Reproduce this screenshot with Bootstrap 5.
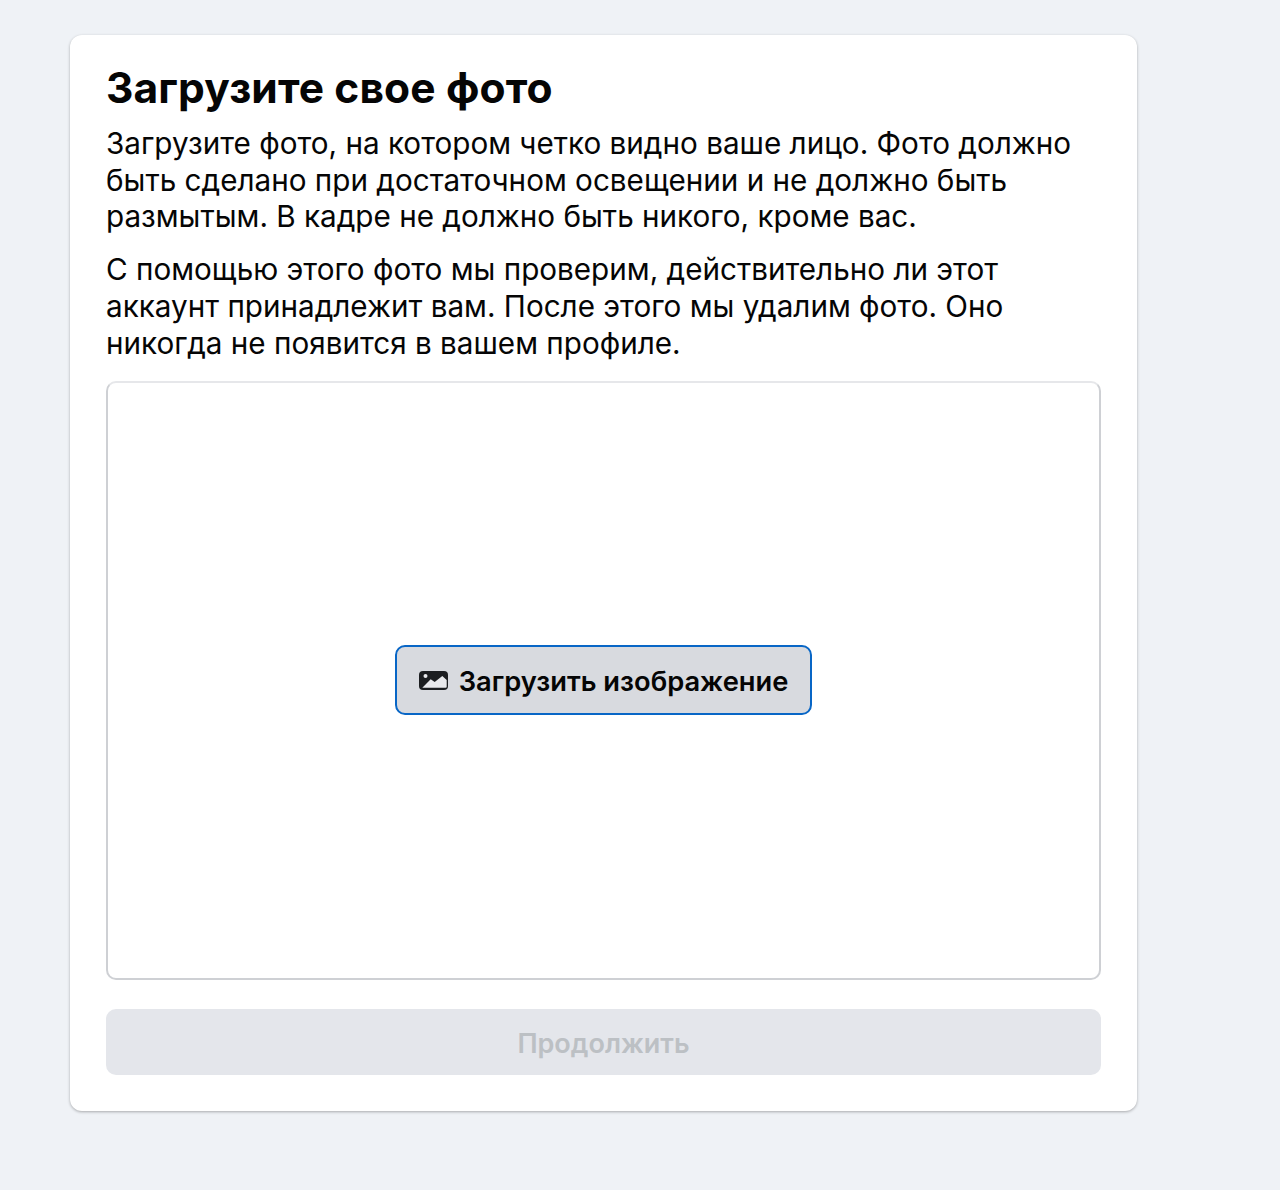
<!DOCTYPE html>
<html lang="ru"><head><meta charset="utf-8">
<link rel="stylesheet" href="https://cdn.jsdelivr.net/npm/bootstrap@5.3.0/dist/css/bootstrap.min.css">
<style>
html,body{height:1190px;overflow:hidden}
body{background:#eff2f6;font-family:Inter,"Liberation Sans",sans-serif;color:#050505;padding:35px 0 0 70px}
.sheet{width:1067px;height:1076px;background:#fff;border-radius:12px;box-shadow:0 1px 3px rgba(0,0,0,.3);padding:29px 36px 36px 36px}
.ttl{font-size:42.5px;font-weight:700;line-height:47px;margin:0 0 14px;letter-spacing:.13px}
.para{font-size:29.67px;line-height:36.7px;margin:0 0 16px}
.drop{height:599px;border:2px solid #ced0d4;border-top-color:#e6e7ea;border-radius:10px;margin-top:20px}
.upl{width:417px;height:70px;margin-bottom:2px;background:#d8dadf;border:2.5px solid #0866c6;border-radius:10px;font-size:27.3px;font-weight:600;color:#050505;gap:11px}
.upl span{padding-top:6px}
.upl svg{margin-top:1px}
.goon{height:66px;margin-top:29px;padding-top:4px;background:#e4e6eb;border-radius:10px;font-size:27px;font-weight:600;color:#bcc0c4}
</style></head><body>
<div class="sheet">
<h1 class="ttl">Загрузите свое фото</h1>
<p class="para">Загрузите фото, на котором четко видно ваше лицо. Фото должно быть сделано при достаточном освещении и не должно быть размытым. В кадре не должно быть никого, кроме вас.</p>
<p class="para mb-0">С помощью этого фото мы проверим, действительно ли этот аккаунт принадлежит вам. После этого мы удалим фото. Оно никогда не появится в вашем профиле.</p>
<div class="drop d-flex align-items-center justify-content-center">
<button type="button" class="upl d-flex align-items-center justify-content-center p-0">
<svg width="29" height="19" viewBox="0 0 29 19"><rect width="29" height="19" rx="4" fill="#1c1e21"/><circle cx="6.5" cy="5" r="2" fill="#e8e9ec"/><path d="M3.3 16.7L11.7 8.3l4 2.7 7.6-6 4.4 4v6.7a1 1 0 0 1-1 1z" fill="#e8e9ec"/></svg>
<span>Загрузить изображение</span></button>
</div>
<div class="goon d-flex align-items-center justify-content-center">Продолжить</div>
</div>
</body></html>
